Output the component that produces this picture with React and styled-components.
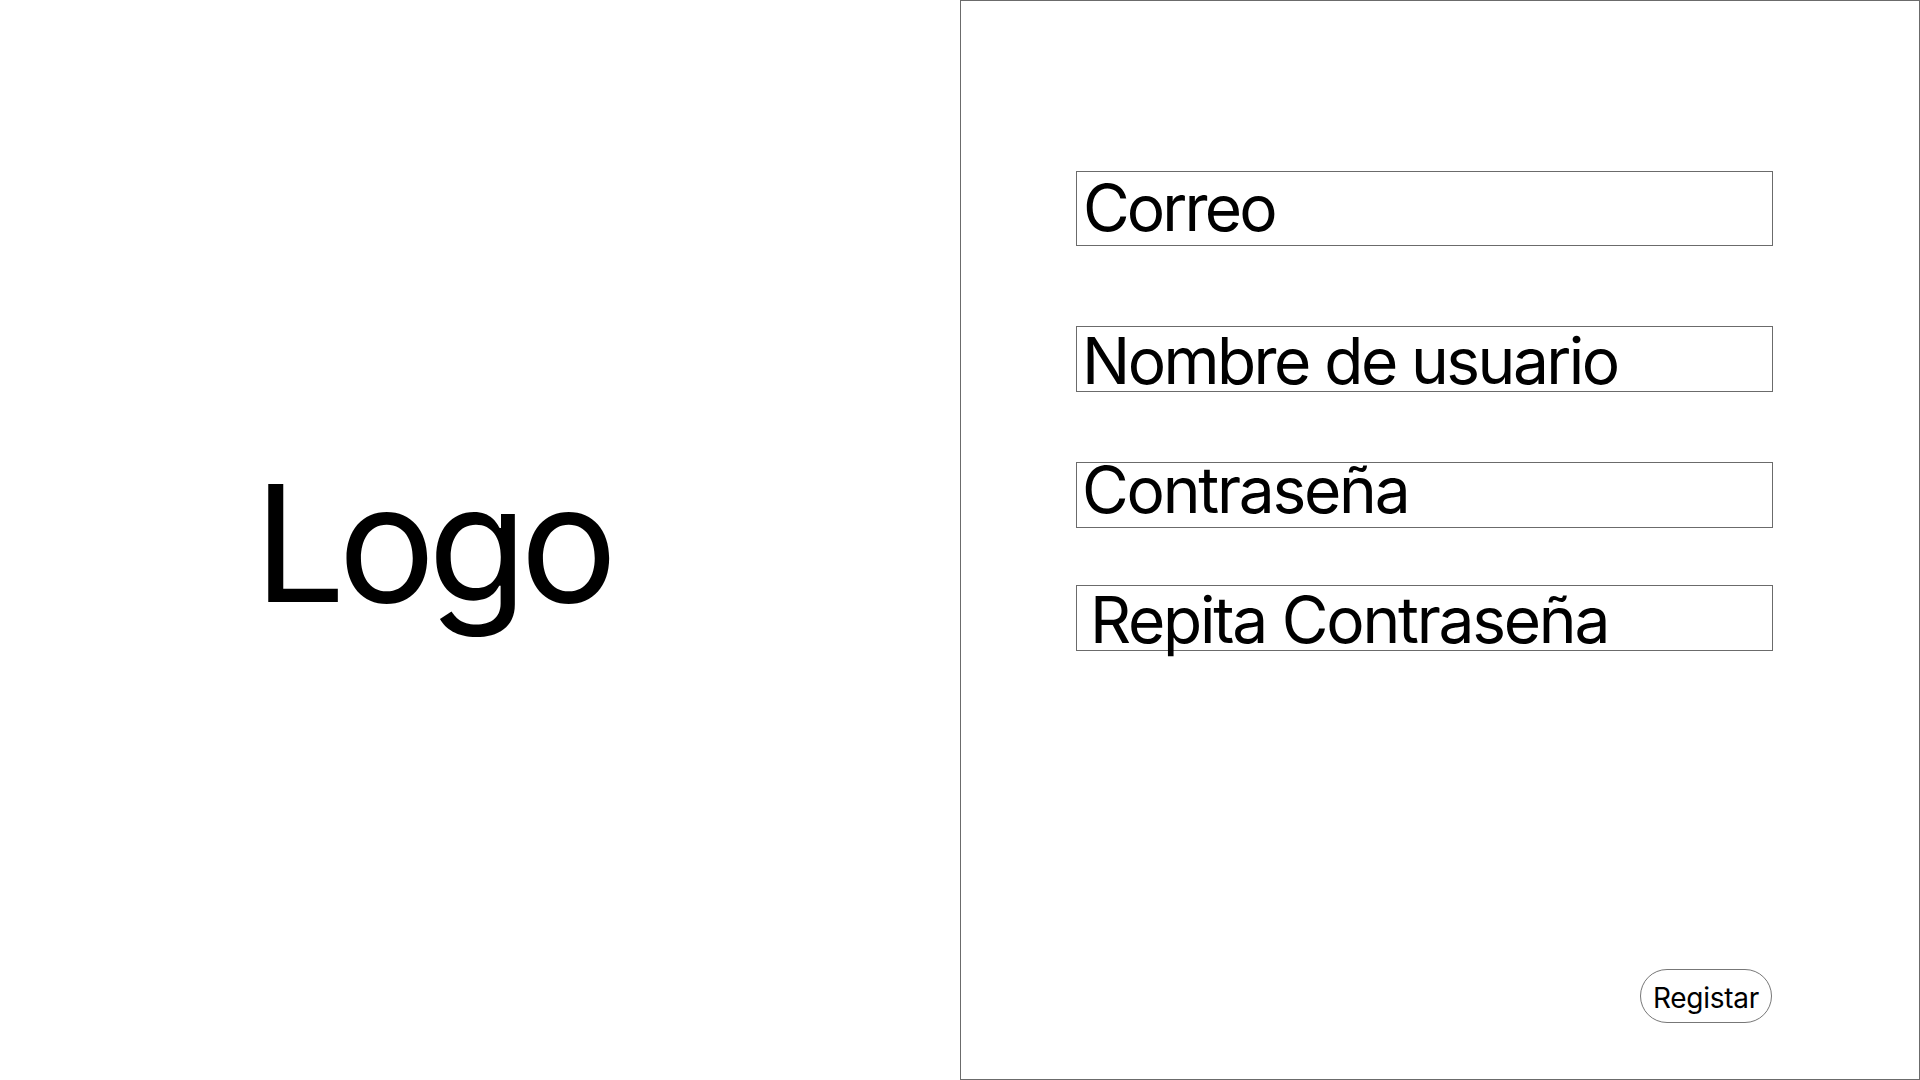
import React from "react";
import styled, { createGlobalStyle } from "styled-components";

const GlobalStyle = createGlobalStyle`
  html, body {
    margin: 0;
    padding: 0;
    background: #ffffff;
  }
  body {
    font-family: Inter, "Noto Sans", sans-serif;
    color: #000000;
  }
  * {
    box-sizing: border-box;
  }
`;

const Page = styled.div`
  display: grid;
  grid-template-columns: 960px 960px;
  width: 1920px;
  height: 1080px;
  overflow: hidden;
`;

const LogoSide = styled.div`
  display: flex;
  align-items: center;
  justify-content: center;
  padding: 6px 96px 0 0;
`;

const Logo = styled.h1`
  margin: 0;
  font-size: 162px;
  font-weight: 400;
  line-height: 1;
  letter-spacing: -0.045em;
`;

const Panel = styled.div`
  display: flex;
  flex-direction: column;
  height: 1080px;
  border: 1px solid #6b6b6b;
  padding: 170px 147px 56px 115px;
`;

const Field = styled.div`
  width: 697px;
  height: ${(p) => p.$h}px;
  margin-top: ${(p) => p.$mt}px;
  border: 1px solid #6b6b6b;
  padding-left: ${(p) => p.$pl}px;
`;

const FieldText = styled.span`
  display: block;
  margin-top: ${(p) => p.$pt}px;
  font-size: 64px;
  line-height: 64px;
  letter-spacing: ${(p) => p.$ls}em;
  white-space: nowrap;
`;

const Register = styled.button`
  margin-top: auto;
  align-self: flex-end;
  height: 54px;
  padding: 3px 12px 0;
  border: 1px solid #777777;
  border-radius: 27px;
  background: #ffffff;
  font-family: Inter, "Noto Sans", sans-serif;
  font-size: 28px;
  color: #000000;
  letter-spacing: -0.01em;
`;

const fields = [
  { label: "Correo", h: 75, mt: 0, pl: 6, pt: 4, ls: -0.045 },
  { label: "Nombre de usuario", h: 66, mt: 80, pl: 5, pt: 2, ls: -0.04 },
  { label: "Contraseña", h: 66, mt: 70, pl: 5, pt: -5, ls: -0.035 },
  { label: "Repita Contraseña", h: 66, mt: 57, pl: 13, pt: 2, ls: -0.035 },
];

export default function App() {
  return (
    <>
      <GlobalStyle />
      <Page>
        <LogoSide>
          <Logo>Logo</Logo>
        </LogoSide>
        <Panel>
          {fields.map((f) => (
            <Field key={f.label} $h={f.h} $mt={f.mt} $pl={f.pl}>
              <FieldText $pt={f.pt} $ls={f.ls}>
                {f.label}
              </FieldText>
            </Field>
          ))}
          <Register>Registar</Register>
        </Panel>
      </Page>
    </>
  );
}
